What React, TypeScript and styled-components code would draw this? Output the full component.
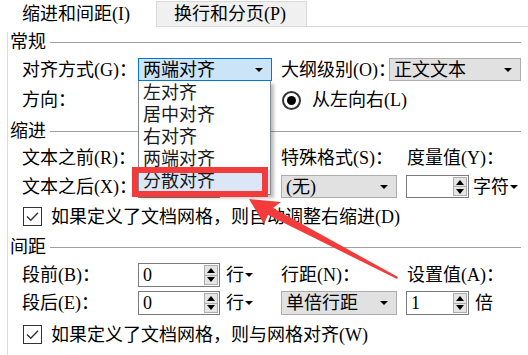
import styled, { createGlobalStyle } from 'styled-components'

const GlobalStyle = createGlobalStyle`
  html, body {
    margin: 0;
    padding: 0;
    background: #fff;
  }
  body {
    font-family: "Liberation Serif", "Noto Sans CJK SC", serif;
    font-size: 18px;
    color: #000;
  }
`

const Dialog = styled.div`
  position: relative;
  width: 528px;
  height: 355px;
  overflow: hidden;
  background: #fff;
`

const TabBar = styled.div`
  display: flex;
  align-items: flex-end;
  height: 27px;
  box-sizing: border-box;
  border-bottom: 1px solid #d9d9d9;
`

const Tab = styled.div<{ $active?: boolean }>`
  display: flex;
  align-items: center;
  box-sizing: border-box;
  white-space: nowrap;
  line-height: 1;
  ${(p) =>
    p.$active
      ? `
    width: 156px;
    height: 27px;
    margin-bottom: -1px;
    padding-left: 22px;
    background: #fff;
  `
      : `
    width: 151px;
    height: 25px;
    padding-left: 17px;
    background: #f0f0f0;
    border: 1px solid #d9d9d9;
    border-bottom: none;
  `}
`

const Panel = styled.div`
  margin-left: 7px;
  height: 328px;
  border-left: 1px solid #dcdcdc;
  padding-left: 2px;
`

const GroupHeader = styled.div<{ $top: number }>`
  display: flex;
  align-items: center;
  height: 20px;
  margin-top: ${(p) => p.$top}px;
  line-height: 1;
  &::after {
    content: '';
    flex: 1;
    margin-left: 4px;
    margin-right: 7px;
    border-top: 1px solid #a0a0a0;
  }
`

const Row = styled.div<{ $top: number; $h: number }>`
  display: flex;
  align-items: center;
  height: ${(p) => p.$h}px;
  margin-top: ${(p) => p.$top}px;
  padding-left: 12px;
  line-height: 1;
  white-space: nowrap;
`

const Label = styled.span<{ $w: number }>`
  flex: none;
  width: ${(p) => p.$w}px;
`

const Mid = styled.div`
  flex: none;
  display: flex;
  align-items: center;
  width: 143px;
  height: 100%;
`

const Right = styled.div`
  display: flex;
  align-items: center;
  height: 100%;
`

const Caret = styled.span`
  display: inline-block;
  width: 0;
  height: 0;
  border-left: 4px solid transparent;
  border-right: 4px solid transparent;
  border-top: 4px solid #000;
`

const ComboWrap = styled.div`
  position: relative;
  height: 100%;
`

const Combo = styled.div<{ $w: number; $focus?: boolean }>`
  display: flex;
  align-items: center;
  justify-content: space-between;
  box-sizing: border-box;
  width: ${(p) => p.$w}px;
  height: 100%;
  padding: 0 8px 0 4px;
  background: ${(p) => (p.$focus ? '#cce4f7' : '#e1e1e1')};
  border: 1px solid ${(p) => (p.$focus ? '#0078d7' : '#adadad')};
`

const ListBox = styled.div`
  position: absolute;
  top: 100%;
  left: 0;
  z-index: 2;
  width: 133px;
  box-sizing: border-box;
  padding: 1px 0 2px;
  background: #fff;
  border: 1px solid #828790;
  border-top: none;
  box-shadow: 3px 3px 3px rgba(0, 0, 0, 0.25);
`

const ListItem = styled.div<{ $hover?: boolean }>`
  display: flex;
  align-items: center;
  height: 22px;
  padding-left: 4px;
  color: #1a1a1a;
  background: ${(p) => (p.$hover ? '#dbe7f7' : 'transparent')};
`

const Spin = styled.div<{ $w: number }>`
  display: flex;
  align-items: stretch;
  box-sizing: border-box;
  width: ${(p) => p.$w}px;
  height: 100%;
  background: #fff;
  border: 1px solid #7a7a7a;
`

const SpinValue = styled.span`
  flex: 1;
  display: flex;
  align-items: center;
  padding-left: 4px;
`

const SpinButtons = styled.div`
  display: flex;
  flex-direction: column;
  width: 14px;
  margin: 1px;
`

const SpinButton = styled.div<{ $up?: boolean }>`
  flex: 1;
  display: flex;
  align-items: center;
  justify-content: center;
  background: #e5e5e5;
  border: 1px solid #adadad;
  & + & {
    border-top: none;
  }
  &::after {
    content: '';
    border-left: 4px solid transparent;
    border-right: 4px solid transparent;
    ${(p) => (p.$up ? 'border-bottom: 5px solid #000;' : 'border-top: 5px solid #000;')}
  }
`

const Unit = styled.span<{ $gap: number }>`
  display: flex;
  align-items: center;
  gap: 1px;
  margin-left: ${(p) => p.$gap}px;
`

const Radio = styled.span`
  display: flex;
  align-items: center;
  justify-content: center;
  box-sizing: border-box;
  width: 19px;
  height: 19px;
  margin-left: 1px;
  border: 2px solid #333;
  border-radius: 50%;
  &::after {
    content: '';
    width: 9px;
    height: 9px;
    border-radius: 50%;
    background: #000;
  }
`

const RadioText = styled.span`
  margin-left: 11px;
`

const CheckBox = styled.span`
  display: flex;
  align-items: center;
  justify-content: center;
  box-sizing: border-box;
  width: 19px;
  height: 19px;
  margin-left: 1px;
  border: 1px solid #333;
  background: #fff;
`

const CheckText = styled.span`
  margin-left: 9px;
`

const Overlay = styled.svg`
  position: absolute;
  left: 0;
  top: 0;
  z-index: 3;
  pointer-events: none;
`

function SpinBox({ w, value }: { w: number; value: string }) {
  return (
    <Spin $w={w}>
      <SpinValue>{value}</SpinValue>
      <SpinButtons>
        <SpinButton $up />
        <SpinButton />
      </SpinButtons>
    </Spin>
  )
}

function Check() {
  return (
    <CheckBox>
      <svg width="15" height="15" viewBox="0 0 15 15">
        <path d="M2 7.5 L5.8 11.3 L13 3.8" fill="none" stroke="#333" strokeWidth="1.4" />
      </svg>
    </CheckBox>
  )
}

const alignOptions = ['左对齐', '居中对齐', '右对齐', '两端对齐', '分散对齐']

export default function App() {
  return (
    <Dialog>
      <GlobalStyle />
      <TabBar>
        <Tab $active>缩进和间距(I)</Tab>
        <Tab>换行和分页(P)</Tab>
      </TabBar>

      <Panel>
        <GroupHeader $top={5}>常规</GroupHeader>
        <Row $top={6} $h={23}>
          <Label $w={116}>对齐方式(G)：</Label>
          <Mid>
            <ComboWrap>
              <Combo $w={134} $focus>
                两端对齐
                <Caret />
              </Combo>
              <ListBox>
                {alignOptions.map((o) => (
                  <ListItem key={o} $hover={o === '分散对齐'}>
                    {o}
                  </ListItem>
                ))}
              </ListBox>
            </ComboWrap>
          </Mid>
          <Right>
            <Label $w={108}>大纲级别(O)：</Label>
            <Combo $w={132}>
              正文文本
              <Caret />
            </Combo>
          </Right>
        </Row>
        <Row $top={8} $h={22}>
          <Label $w={116}>方向：</Label>
          <Mid />
          <Right>
            <Radio />
            <RadioText>从左向右(L)</RadioText>
          </Right>
        </Row>

        <GroupHeader $top={10}>缩进</GroupHeader>
        <Row $top={5} $h={23}>
          <Label $w={116}>文本之前(R)：</Label>
          <Mid>
            <SpinBox w={82} value="" />
            <Unit $gap={6}>
              字符
              <Caret />
            </Unit>
          </Mid>
          <Right>
            <Label $w={126}>特殊格式(S)：</Label>
            <Label $w={100}>度量值(Y)：</Label>
          </Right>
        </Row>
        <Row $top={6} $h={23}>
          <Label $w={116}>文本之后(X)：</Label>
          <Mid>
            <SpinBox w={82} value="" />
            <Unit $gap={6}>
              字符
              <Caret />
            </Unit>
          </Mid>
          <Right>
            <Combo $w={116}>
              (无)
              <Caret />
            </Combo>
            <Label $w={9} />
            <SpinBox w={63} value="" />
            <Unit $gap={4}>
              字符
              <Caret />
            </Unit>
          </Right>
        </Row>
        <Row $top={8} $h={21}>
          <Check />
          <CheckText>如果定义了文档网格，则自动调整右缩进(D)</CheckText>
        </Row>

        <GroupHeader $top={10}>间距</GroupHeader>
        <Row $top={6} $h={24}>
          <Label $w={116}>段前(B)：</Label>
          <Mid>
            <SpinBox w={82} value="0" />
            <Unit $gap={6}>
              行
              <Caret />
            </Unit>
          </Mid>
          <Right>
            <Label $w={126}>行距(N)：</Label>
            <Label $w={100}>设置值(A)：</Label>
          </Right>
        </Row>
        <Row $top={4} $h={24}>
          <Label $w={116}>段后(E)：</Label>
          <Mid>
            <SpinBox w={82} value="0" />
            <Unit $gap={6}>
              行
              <Caret />
            </Unit>
          </Mid>
          <Right>
            <Combo $w={116}>
              单倍行距
              <Caret />
            </Combo>
            <Label $w={9} />
            <SpinBox w={63} value="1" />
            <Unit $gap={6}>倍</Unit>
          </Right>
        </Row>
        <Row $top={9} $h={21}>
          <Check />
          <CheckText>如果定义了文档网格，则与网格对齐(W)</CheckText>
        </Row>
      </Panel>

      <Overlay width="528" height="355" viewBox="0 0 528 355">
        <rect x="135" y="170" width="130" height="24" fill="none" stroke="#f33b3b" strokeWidth="6" />
        <polygon
          points="249,199 281,202 273,208 398,277 397,279 268,215 264,224"
          fill="#f33b3b"
        />
      </Overlay>
    </Dialog>
  )
}
